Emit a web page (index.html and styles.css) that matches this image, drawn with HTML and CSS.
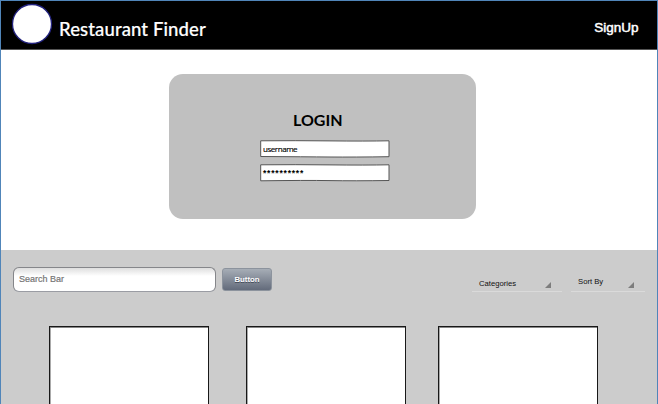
FILE: index.html
```
<!DOCTYPE html>
<html lang="en">
<head>
<meta charset="utf-8">
<title>Restaurant Finder</title>
<link rel="stylesheet" href="styles.css">
</head>
<body>
<div class="page">
  <header class="header">
    <svg class="logo" width="42" height="42" viewBox="0 0 42 42"><circle cx="21" cy="21" r="19.5" fill="#fff" stroke="#23237f" stroke-width="1.3"/></svg>
    <h1 class="title">Restaurant Finder</h1>
    <a class="signup">SignUp</a>
  </header>
  <section class="hero">
    <form class="login">
      <h2 class="login-title">LOGIN</h2>
      <div class="field">
        <svg class="outline" width="130" height="18" viewBox="0 0 130 18"><path d="M.7 .8 Q35 .5 70 .9 T129 .8 L129 16.7 Q94 17.2 70 17 T.7 16.5Z"/></svg>
        <span class="value username">username</span>
      </div>
      <div class="field">
        <svg class="outline" width="130" height="18" viewBox="0 0 130 18"><path d="M.7 .8 Q35 .5 70 .9 T129 .8 L129 16.5 Q94 17 70 16.6 T.7 16.8Z"/></svg>
        <span class="value password">**********</span>
      </div>
    </form>
  </section>
  <main class="results">
    <div class="toolbar">
      <div class="search">Search Bar</div>
      <div class="button">Button</div>
      <div class="select categories"><span>Categories</span><i class="arrow"></i></div>
      <div class="select sort"><span>Sort By</span><i class="arrow"></i></div>
    </div>
    <div class="cards">
      <article class="card"></article>
      <article class="card"></article>
      <article class="card"></article>
    </div>
  </main>
</div>
</body>
</html>
```
FILE: styles.css
```
* { box-sizing: border-box; }
body {
  margin: 0;
  overflow: hidden;
  font-family: "Liberation Sans", sans-serif;
}
.page {
  width: 658px;
  height: 404px;
  overflow: hidden;
  display: flex;
  flex-direction: column;
  border: 1px solid #5085b9;
  border-bottom: 0;
  background: #fff;
}
.header {
  flex: none;
  display: flex;
  height: 49px;
  background: #000;
  border-bottom: 1px solid #555;
  color: #fff;
  white-space: nowrap;
}
.logo { flex: none; margin: 2px 0 0 10px; }
.title {
  margin: 16px 0 0 6px;
  font: 500 18.5px/24px Lato, sans-serif;
  letter-spacing: .12px;
  -webkit-text-stroke: .2px #fff;
}
.signup {
  margin: 18px 18.5px 0 auto;
  font-size: 13.5px;
  line-height: 17px;
  -webkit-text-stroke: .5px #fff;
}
.hero {
  flex: none;
  height: 200px;
  padding: 24px 0 0 168px;
}
.login {
  display: flex;
  flex-direction: column;
  width: 307px;
  height: 144.5px;
  padding: 36px 0 0 91px;
  border-radius: 14px;
  background: #c0c0c0;
}
.login-title {
  margin: 0 0 10px 33px;
  font: 700 16px/20px Lato, sans-serif;
}
.field {
  display: grid;
  width: 130px;
  height: 18px;
  margin-bottom: 6px;
}
.outline, .value { grid-area: 1 / 1; }
.outline path { fill: #fff; stroke: #555; stroke-width: 1; }
.value { padding-left: 3px; white-space: nowrap; }
.username {
  font: 8px/18px "Open Sans", sans-serif;
  letter-spacing: -.45px;
  -webkit-text-stroke: .15px #000;
}
.password {
  font: 700 8.5px/18px "Liberation Sans", sans-serif;
  letter-spacing: .8px;
}
.results { flex: 1; background: #ccc; }
.toolbar {
  display: flex;
  height: 76px;
  padding: 17px 0 0 11.5px;
  white-space: nowrap;
}
.search {
  width: 203.5px;
  height: 24.5px;
  padding-left: 5.5px;
  border: 1px solid #85868a;
  border-bottom-color: #9a9ca3;
  border-radius: 6px;
  background: linear-gradient(#dedede, #fff 35%);
  color: #757575;
  font-size: 9px;
  line-height: 22px;
  -webkit-text-stroke: .2px #757575;
}
.button {
  width: 50px;
  height: 23px;
  margin: 1px 0 0 6px;
  border: 1px solid #8c939d;
  border-radius: 3px;
  background: linear-gradient(#a6adb6, #636b7b);
  color: #fff;
  text-align: center;
  font-weight: 700;
  font-size: 7.8px;
  line-height: 21px;
  text-shadow: 0 1px 0 #454c59;
}
.select {
  display: flex;
  height: 25px;
  border-bottom: 1px solid #dadada;
  color: #111;
  font-size: 7.7px;
  line-height: 10px;
}
.select span { margin-top: 12px; }
.arrow {
  width: 6px;
  height: 6px;
  margin: 15px 11px 0 auto;
  background: #7d7d7d;
  clip-path: polygon(100% 0, 100% 100%, 0 100%);
}
.categories { width: 90px; margin-left: 200px; padding-left: 7px; }
.sort { width: 74px; margin-left: 9px; padding-left: 7px; }
.sort span { margin-top: 10px; }
.cards { display: flex; padding-left: 48px; gap: 37px; }
.card {
  width: 160px;
  height: 160px;
  border: 1px solid #181818;
  background: #fff;
  box-shadow: inset 0 1px #888, inset 1px 0 #aaa;
}
.card:last-child { margin-left: -5px; }
.card:nth-child(2) { margin-left: -.5px; }
```
